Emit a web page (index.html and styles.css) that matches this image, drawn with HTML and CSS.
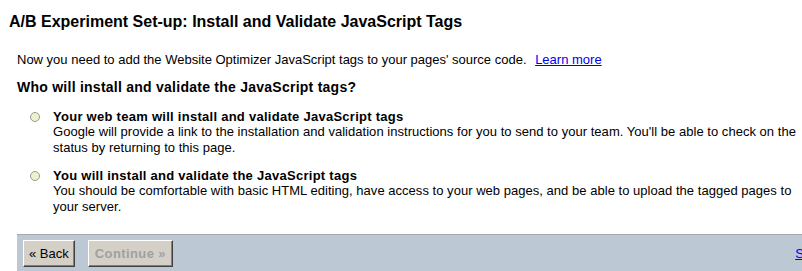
FILE: index.html
```html
<!DOCTYPE html>
<html lang="en">
<head>
    <meta charset="UTF-8">
    <title>A/B Experiment Set-up: Install and Validate JavaScript Tags</title>
    <link rel="stylesheet" href="styles.css">
</head>
<body>
    <div class="setup-page">
        <h1 class="page-title">A/B Experiment Set-up: Install and Validate JavaScript Tags</h1>

        <div class="setup-body">
            <p class="intro">
                Now you need to add the Website Optimizer JavaScript tags to your pages' source code.
                <a href="#" class="learn-link">Learn more</a>
            </p>

            <h2 class="question">Who will install and validate the JavaScript tags?</h2>

            <ul class="choice-list">
                <li class="choice">
                    <span class="radio"></span>
                    <div class="choice-text">
                        <div class="choice-label">Your web team will install and validate JavaScript tags</div>
                        <div class="choice-desc">Google will provide a link to the installation and validation instructions for you to send to your team. You'll be able to check on the status by returning to this page.</div>
                    </div>
                </li>
                <li class="choice">
                    <span class="radio"></span>
                    <div class="choice-text">
                        <div class="choice-label">You will install and validate the JavaScript tags</div>
                        <div class="choice-desc">You should be comfortable with basic HTML editing, have access to your web pages, and be able to upload the tagged pages to your server.</div>
                    </div>
                </li>
            </ul>

            <div class="button-bar">
                <button class="btn">&laquo; Back</button>
                <button class="btn" disabled>Continue &raquo;</button>
                <a href="#" class="save-link">Save and finish later</a>
            </div>
        </div>
    </div>
</body>
</html>
```

FILE: styles.css
```css
* {
    margin: 0;
    padding: 0;
    box-sizing: border-box;
}

html {
    overflow: hidden;
}

body {
    font-family: "Liberation Sans", Arial, sans-serif;
    font-size: 13px;
    color: #000;
    background: #fff;
}

.page-title {
    font-size: 16px;
    font-weight: bold;
    line-height: 19px;
    padding: 12px 0 0 9px;
}

.setup-body {
    padding: 21px 0 0 17px;
}

.intro {
    line-height: 16px;
}

.learn-link {
    color: #0000ee;
    margin-left: 5px;
}

.question {
    font-size: 14px;
    font-weight: bold;
    letter-spacing: 0.25px;
    line-height: 17px;
    margin-top: 11px;
}

.choice-list {
    list-style: none;
    padding: 13px 0 0 13px;
}

.choice {
    display: flex;
    gap: 13px;
    margin-bottom: 12px;
}

.radio {
    flex: none;
    width: 10px;
    height: 10px;
    margin-top: 3px;
    border-radius: 50%;
    border: 1px solid #9a9a8a;
    background: #eef2cc;
}

.choice-label {
    font-weight: bold;
    letter-spacing: 0.27px;
    line-height: 15px;
}

.choice-desc {
    line-height: 16px;
    letter-spacing: 0.03px;
}

.button-bar {
    display: flex;
    align-items: flex-start;
    gap: 13px;
    margin-top: 19px;
    margin-right: -119px;
    height: 40px;
    padding: 5px 8px 0 6px;
    background: #bcc8d4;
    border-top: 1px solid #a8a8a8;
}

.btn {
    font-family: "Liberation Sans", Arial, sans-serif;
    font-size: 13px;
    height: 27px;
    padding: 0 5px;
    background: #d4d0c8;
    color: #000;
    border: 1px solid;
    border-color: #fff #404040 #404040 #fff;
    box-shadow: inset -1px -1px #808080;
}

.btn:disabled {
    color: #a0a0a0;
    font-weight: bold;
    letter-spacing: 0.4px;
    padding: 0 6px;
}

.save-link {
    margin-left: auto;
    margin-top: 6px;
    color: #0000ee;
    white-space: nowrap;
}
```
